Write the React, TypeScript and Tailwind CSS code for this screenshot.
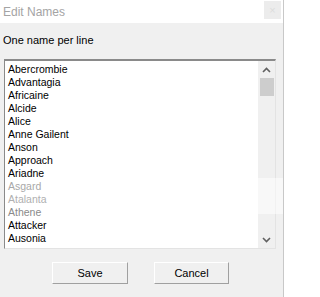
import React from "react";

const names: { n: string; c?: string }[] = [
  { n: "Abercrombie" },
  { n: "Advantagia" },
  { n: "Africaine" },
  { n: "Alcide" },
  { n: "Alice" },
  { n: "Anne Gailent" },
  { n: "Anson" },
  { n: "Approach" },
  { n: "Ariadne" },
  { n: "Asgard", c: "text-[#a8a8a8]" },
  { n: "Atalanta", c: "text-[#b0b0b0]" },
  { n: "Athene", c: "text-[#8a8a8a]" },
  { n: "Attacker" },
  { n: "Ausonia" },
];

export default function App() {
  return (
    <div className="relative w-[284px] h-[297px] bg-[#f0f0f0] font-['Liberation_Sans',Arial,sans-serif] flex flex-col overflow-hidden border-r border-[#c8c8c8]">
      {/* title bar */}
      <div className="h-[23px] bg-white flex items-center justify-between pl-[3px] pr-[2px]">
        <span className="text-[12px] text-[#a4a4a4] leading-none">Edit Names</span>
        <div className="w-[17px] h-[18px] bg-[#ececec] flex items-center justify-center text-[11px] text-[#dcdcdc] leading-none -mt-[3px]">
          ×
        </div>
      </div>

      {/* label */}
      <div className="mt-[11px] pl-[3px] text-[11px] leading-[13px] text-black">One name per line</div>

      {/* listbox */}
      <div className="mt-[12px] ml-[4px] w-[272px] h-[190px] flex bg-white border-t-2 border-l border-t-[#8a8a8a] border-l-[#8a8a8a] border-r border-b border-r-[#e3e3e3] border-b-[#e3e3e3]">
        <div className="flex-1 pt-[2px] pl-[3px] overflow-hidden">
          {names.map((it) => (
            <div key={it.n} className={`text-[10.5px] leading-[13px] ${it.c ?? "text-black"}`}>
              {it.n}
            </div>
          ))}
        </div>
        <div className="w-[17px] h-full bg-[#f0f0f0] flex flex-col items-center">
          <div className="h-[17px] w-full flex items-center justify-center">
            <svg width="9" height="6" viewBox="0 0 9 6">
              <polyline points="1,5 4.5,1.5 8,5" fill="none" stroke="#606060" strokeWidth="1.6" />
            </svg>
          </div>
          <div className="w-[14px] h-[18px] bg-[#cdcdcd]" />
          <div className="flex-1" />
          <div className="h-[17px] w-full flex items-center justify-center">
            <svg width="9" height="6" viewBox="0 0 9 6">
              <polyline points="1,1 4.5,4.5 8,1" fill="none" stroke="#606060" strokeWidth="1.6" />
            </svg>
          </div>
        </div>
      </div>

      {/* buttons */}
      <div className="mt-[13px] ml-[52px] flex gap-[26px]">
        <button className="w-[76px] h-[22px] bg-[#f0f0f0] border border-t-white border-l-white border-r-[#a0a0a0] border-b-[#a0a0a0] text-[11px] text-black leading-none">
          Save
        </button>
        <button className="w-[75px] h-[22px] bg-[#f0f0f0] border border-t-white border-l-white border-r-[#a0a0a0] border-b-[#a0a0a0] text-[11px] text-black leading-none">
          Cancel
        </button>
      </div>

      {/* overlay artifact */}
      <div className="absolute left-[252px] top-[178px] w-[32px] h-[36px] bg-white/50" />
    </div>
  );
}
